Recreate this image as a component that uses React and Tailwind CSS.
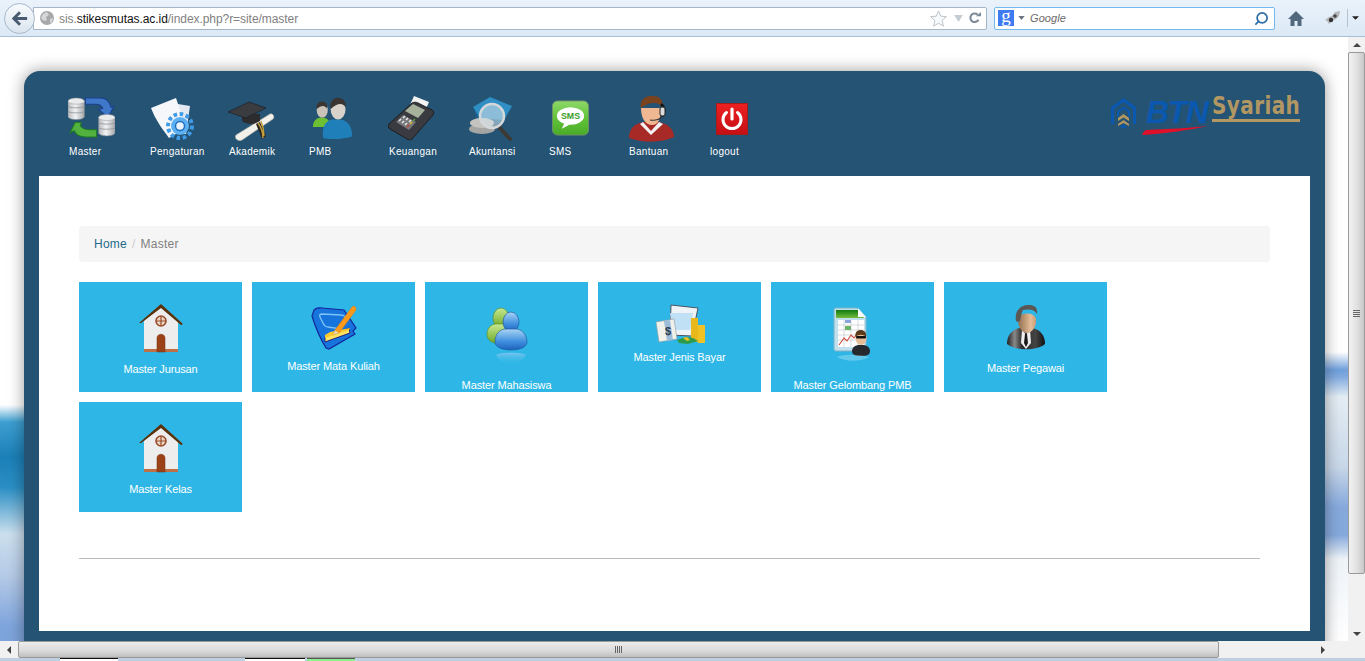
import React from 'react';
import { Search } from 'lucide-react';

// ---- nav icons ----
const DbStack = ({ x, y }) => (
  <g transform={`translate(${x} ${y})`}>
    <path d="M0 3v15c0 2 4 3 8 3s8-1 8-3V3z" fill="url(#silver)" stroke="#8a8f94" strokeWidth=".5" />
    <ellipse cx="8" cy="3" rx="8" ry="3" fill="#e8eaec" stroke="#9a9ea2" strokeWidth=".5" />
    <path d="M0 8c1 2 15 2 16 0M0 13c1 2 15 2 16 0" fill="none" stroke="#8f9499" strokeWidth=".8" />
  </g>
);

const IconMaster = () => (
  <svg viewBox="1 2 46 41" className="w-[47px] h-[44px]">
    <path d="M18 3h14c7 0 10 4 11 9l3-1-6 11-9-8 4-1c-1-3-4-4-7-4H18z" fill="#3f78c8" stroke="#1d3f8f" />
    <path d="M8 27h6l-1 3c2 3 6 4 10 4h6v7H18c-5 0-9-2-11-6l-4 2z" fill="#52b13f" stroke="#1f7a22" />
    <DbStack x={1} y={3} />
    <DbStack x={31} y={19} />
  </svg>
);

const IconPengaturan = () => (
  <svg viewBox="0 0 48 46" className="w-[48px] h-[46px]">
    <path d="M23 6l18 3-4 28-18-2z" fill="#e4e8f2" />
    <path d="M2 11L27 1l10 30-17 10C14 33 6 22 2 11z" fill="#f6f7fb" />
    <g transform="translate(31 29)">
      <circle r="12" fill="none" stroke="#3f9be8" strokeWidth="4" strokeDasharray="3.6 2.6" />
      <circle r="9" fill="#5db0f2" />
      <circle r="4.5" fill="#e8f2fb" stroke="#1f6fc0" strokeWidth="1.5" />
    </g>
  </svg>
);

const IconAkademik = () => (
  <svg viewBox="0 0 48 46" className="w-[48px] h-[46px]">
    <path d="M8 39L42 18c3-1 5 3 3 5L14 44c-4 2-8-2-6-5z" fill="#f1f0ea" stroke="#b9b7ac" strokeWidth=".6" />
    <path d="M28 28l4-2 6 14-4 3z" fill="#2a2520" />
    <path d="M30 27c3 4 5 9 5 15M33 25c2 5 3 9 3 15" stroke="#c6a03a" strokeWidth="1.4" fill="none" />
    <path d="M14 17v8c5 4 12 4 18 0v-7z" fill="#2c2c2e" />
    <path d="M0 16L21 6l17 6-20 10z" fill="#3b3c40" stroke="#1a1a1c" strokeWidth=".6" />
  </svg>
);

const IconPmb = () => (
  <svg viewBox="0 0 44 46" className="w-[41px] h-[43px]">
    <path d="M1 32c0-6 3-9 8-10h3c5 1 8 4 8 10z" fill="#6cc032" />
    <ellipse cx="11" cy="14" rx="6" ry="8" fill="#c9c2b8" />
    <path d="M5 13c-1-7 4-9 7-8 3 0 5 3 4 7-2-3-6-4-11 1z" fill="#3a3533" />
    <path d="M12 44c-2-11 2-18 9-20h9c9 1 13 8 13 18-7 3-23 4-31 2z" fill="#1f7fb8" />
    <ellipse cx="28" cy="13" rx="8" ry="11" fill="#d8d2ca" />
    <path d="M20 13c-2-9 5-13 9-12 5 0 8 5 7 10-2-4-8-6-16 2z" fill="#3a3533" />
  </svg>
);

const IconKeuangan = () => (
  <svg viewBox="0 0 48 46" className="w-[48px] h-[46px]">
    <path d="M26 0l15 6-4 9-15-6z" fill="#f2f2f2" />
    <path d="M1 28L24 7c2-1 4-1 6 0l14 7c2 1 2 3 1 5L24 43c-2 1-3 1-5 0L2 33c-2-1-2-3-1-5z" fill="#3a3b40" stroke="#1e1f22" />
    <path d="M17 15l8-7 12 6-7 8z" fill="#a7b29c" />
    <path d="M8 26l7-7 13 7-7 8z" fill="#75777c" />
    <path d="M11 25l2-2M14 27l2-2M17 29l2-2M15 22l2-2M18 24l2-2M21 26l2-2" stroke="#e8e8e8" strokeWidth="1.6" />
    <path d="M22 28l2-2" stroke="#e0c030" strokeWidth="1.6" />
    <path d="M19 31l2-2" stroke="#d04030" strokeWidth="1.6" />
    <path d="M25 25l2-2" stroke="#50a040" strokeWidth="1.6" />
  </svg>
);

const IconAkuntansi = () => (
  <svg viewBox="0 0 48 46" className="w-[48px] h-[46px]">
    <path d="M5 11L22 1l22 9-8 14-24-1z" fill="#2f8fc4" />
    <path d="M5 11l7 12 24 1v3H10z" fill="#1a5f8e" />
    <ellipse cx="14" cy="33" rx="13" ry="5" fill="#a5a5a3" />
    <ellipse cx="14" cy="27" rx="12" ry="5" fill="#c5c4c0" />
    <path d="M31 31l11 12" stroke="#3d3a36" strokeWidth="4" strokeLinecap="round" />
    <circle cx="24" cy="20" r="12" fill="#d9e4ea" fillOpacity=".55" stroke="#d5d8da" strokeWidth="2.5" />
  </svg>
);

const IconSms = () => (
  <svg viewBox="0 0 38 36" className="w-[37px] h-[36px]">
    <rect x=".5" y=".5" width="37" height="35" rx="5" fill="url(#smsGreen)" stroke="#6f8f6a" />
    <ellipse cx="19" cy="16" rx="14" ry="9" fill="#fff" />
    <path d="M13 23l-3 6 8-4z" fill="#fff" />
    <text x="19" y="19.5" textAnchor="middle" fontFamily="Liberation Sans, sans-serif" fontSize="9" fontWeight="700" fill="#3b9e1f">SMS</text>
  </svg>
);

const IconBantuan = () => (
  <svg viewBox="0 0 48 46" className="w-[48px] h-[46px]">
    <path d="M1 42c0-9 5-14 14-16h16c10 2 15 8 15 15-12 6-32 6-45 1z" fill="#a82a26" />
    <path d="M15 26l8 9 8-9 4 2-12 11-11-11z" fill="#f2f2f2" />
    <path d="M13 12c0 11 5 17 11 17s9-6 9-17z" fill="#f0b892" />
    <path d="M13 12C11 4 18-1 25 0c7 0 11 5 9 11-3-5-12-6-21 1z" fill="#7a4320" />
    <path d="M33 8c4 3 4 9 1 12" fill="none" stroke="#111" strokeWidth="2.5" />
    <rect x="32" y="11" width="5" height="9" rx="2" fill="#ddd" stroke="#222" />
    <path d="M34 20c-1 3-6 5-12 4" stroke="#333" strokeWidth="1.2" fill="none" />
  </svg>
);

const IconLogout = () => (
  <svg viewBox="0 0 32 32" className="w-[32px] h-[32px]">
    <rect x=".5" y=".5" width="31" height="31" fill="url(#powerRed)" stroke="#a51c1c" />
    <path d="M10.5 9.5a9 9 0 1 0 11 0" fill="none" stroke="#fff" strokeWidth="3" strokeLinecap="round" />
    <path d="M16 6v10" stroke="#fff" strokeWidth="3.2" strokeLinecap="round" />
  </svg>
);

// ---- tile icons ----
const IconHouse = () => (
  <svg viewBox="0 0 46 50" className="w-[46px] h-[50px]">
    <path d="M6 18L23 3l17 15v30H6z" fill="#ededed" />
    <path d="M1 20L23 1l22 20-2 1L23 5 3 20z" fill="#5a3208" />
    <rect x="6" y="46" width="34" height="3" fill="#bf6f45" />
    <circle cx="23" cy="18" r="5" fill="#e8d6c4" stroke="#9c4a2a" strokeWidth="1.6" />
    <path d="M23 13v10M18 18h10" stroke="#9c4a2a" strokeWidth="1.2" />
    <path d="M19 49V35c0-5 8-5 8 0v14z" fill="#9b4219" stroke="#74300f" strokeWidth=".5" />
  </svg>
);

const IconBook = () => (
  <svg viewBox="0 0 46 46" className="w-[46px] h-[46px]">
    <path d="M3 6c3-3 5-2 8-2l22 2 12 18-3 3 2 3-26 15-3-1C9 34 4 22 1 12z" fill="#1674dc" stroke="#14269c" strokeWidth="1.2" />
    <path d="M11 10l19 1c3 0 4 2 4 3l-4 11-13-2c-3 0-4-2-5-4l-3-6c-1-2 0-3 2-3z" fill="none" stroke="#7cc4f6" strokeWidth="1.4" />
    <path d="M14 33l24-9 1 5-25 9z" fill="#fde35f" stroke="#242080" />
    <path d="M14 31l5-3 20-4-1 2-24 8z" fill="#ffc92e" />
    <path d="M24 26L41 3c1-2 5 0 4 3L28 29l-6 2z" fill="#fb9a1a" stroke="#e47c08" strokeWidth=".5" />
    <path d="M22 31l2-5 4 3z" fill="#e9d4a5" />
  </svg>
);

const IconUsers = () => (
  <svg viewBox="0 0 42 60" className="w-[42px] h-[60px]">
    <ellipse cx="15" cy="11" rx="8" ry="10" fill="url(#msnGreen)" stroke="#5b8a1a" strokeWidth=".6" />
    <path d="M1 28c0-7 4-11 9-11h10c5 0 8 5 8 11 0 5-5 9-13 9S1 33 1 28z" fill="url(#msnGreen)" stroke="#5b8a1a" strokeWidth=".6" />
    <ellipse cx="25" cy="15" rx="8" ry="10" fill="url(#msnBlue)" stroke="#1d4f9c" strokeWidth=".6" />
    <path d="M9 35c0-8 5-13 11-13h10c6 0 11 6 11 13 0 5-7 8-16 8S9 40 9 35z" fill="url(#msnBlue)" stroke="#1d4f9c" strokeWidth=".6" />
    <path d="M10 48c3-3 27-3 30 0-3 5-8 10-15 10s-12-5-15-10z" fill="url(#msnFade)" />
  </svg>
);

const IconMoney = () => (
  <svg viewBox="0 0 50 42" className="w-[50px] h-[42px]">
    <path d="M16 1l27 3-6 28-22-1z" fill="#eef3f8" stroke="#4a5460" />
    <path d="M15 9h23l-3 17H17z" fill="#bfe0f5" />
    <rect x="36" y="14" width="7" height="24" fill="#e8b81c" />
    <rect x="43" y="21" width="7" height="18" fill="#f0c224" />
    <path d="M1 18l18-3 3 20-18 3z" fill="#f1f1ec" stroke="#8e98a0" strokeWidth=".6" />
    <path d="M9 17l6-1 3 20-6 1z" fill="#9dbcd8" />
    <text x="13" y="31" textAnchor="middle" fontFamily="Liberation Sans, sans-serif" fontSize="11" fontWeight="700" fill="#30404f">$</text>
    <path d="M22 36l9-3 7 1 5 3-10 3-9-1z" fill="#2f9a4a" />
    <path d="M28 34l4-1 3 3-3 1z" fill="#f0c224" />
  </svg>
);

const IconSheet = () => (
  <svg viewBox="0 0 40 58" className="w-[40px] h-[58px]">
    <path d="M1 3c0-1 1-2 2-2h21l9 9v34H3c-1 0-2-1-2-2z" fill="#bfe0ec" stroke="#7eb0c8" />
    <path d="M3 3h22l6 8H3z" fill="url(#sheetGreen)" />
    <path d="M25 1l8 9h-8z" fill="#fff" />
    <rect x="5" y="13" width="26" height="27" fill="#fff" />
    <path d="M5 18h26M5 23h26M5 28h26M5 33h26M11 13v27M18 13v27M25 13v27" stroke="#bcc4c8" strokeWidth=".6" />
    <rect x="12" y="19" width="6" height="4" fill="#6db36a" />
    <rect x="12" y="13" width="6" height="3" fill="#8aa4dc" />
    <path d="M6 38l5-7 3 3 4-6 3 3 4-5" fill="none" stroke="#d04a3a" strokeWidth="1.1" />
    <path d="M19 44c0-4 4-6 7-6h4c3 0 7 2 7 6 0 4-3 5-9 5s-9-1-9-5z" fill="#262a2e" />
    <ellipse cx="28" cy="31" rx="5.5" ry="7" fill="#e6bf98" />
    <path d="M22.5 30c-1-6 3-7 5.5-7s6 2 5 7c-2-3-8-3-10.500 0z" fill="#5c3a1c" />
    <rect x="23" y="29" width="10" height="2.4" rx="1" fill="#111" />
    <path d="M4 50c6-3 25-3 32 0-8 5-24 5-32 0z" fill="#fff" fillOpacity=".25" />
  </svg>
);

const IconBoss = () => (
  <svg viewBox="0 0 38 46" className="w-[38px] h-[46px]">
    <path d="M0 40c0-9 5-14 12-16h14c7 2 12 7 12 16-8 7-30 7-38 0z" fill="url(#suit)" />
    <path d="M15 25l4 6 4-6 1 14-5 6-5-6z" fill="#efefef" />
    <path d="M18 30h2l1 9-2 4-2-4z" fill="#1a1a1a" />
    <path d="M11 16c0 7 4 13 9 13s10-7 9-14c-1-7-17-8-18 1z" fill="url(#skin)" />
    <path d="M9 17C7 6 15 0 22 1c6 0 9 3 8 9-3-5-8-5-14-4-2 3-2 7-3 11-2 1-3 1-4 0z" fill="#5a5754" />
  </svg>
);

const Defs = () => (
  <svg className="w-0 h-0 block" aria-hidden="true">
    <defs>
      <linearGradient id="silver" x1="0" x2="1" y1="0" y2="0">
        <stop offset="0" stopColor="#b5b8bb" /><stop offset=".45" stopColor="#f2f3f4" /><stop offset="1" stopColor="#a4a7aa" />
      </linearGradient>
      <linearGradient id="smsGreen" x1="0" x2="0" y1="0" y2="1">
        <stop offset="0" stopColor="#8ed86a" /><stop offset=".5" stopColor="#62c33a" /><stop offset="1" stopColor="#4aab27" />
      </linearGradient>
      <linearGradient id="powerRed" x1="0" x2="0" y1="0" y2="1">
        <stop offset="0" stopColor="#ee2020" /><stop offset="1" stopColor="#c40f14" />
      </linearGradient>
      <linearGradient id="msnGreen" x1="0" x2="0" y1="0" y2="1">
        <stop offset="0" stopColor="#c8e890" /><stop offset="1" stopColor="#69a722" />
      </linearGradient>
      <linearGradient id="msnBlue" x1="0" x2="0" y1="0" y2="1">
        <stop offset="0" stopColor="#a8d4f4" /><stop offset=".6" stopColor="#3f8ede" /><stop offset="1" stopColor="#1e63bd" />
      </linearGradient>
      <linearGradient id="msnFade" x1="0" x2="0" y1="0" y2="1">
        <stop offset="0" stopColor="#7fc4ef" stopOpacity=".9" /><stop offset="1" stopColor="#2fb8e6" stopOpacity="0" />
      </linearGradient>
      <linearGradient id="sheetGreen" x1="0" x2="0" y1="0" y2="1">
        <stop offset="0" stopColor="#0f7a10" /><stop offset="1" stopColor="#74bb3d" />
      </linearGradient>
      <linearGradient id="suit" x1="0" x2="1" y1="0" y2="0">
        <stop offset="0" stopColor="#1f1f1f" /><stop offset=".2" stopColor="#888" /><stop offset=".4" stopColor="#2a2a2a" /><stop offset=".75" stopColor="#444" /><stop offset="1" stopColor="#111" />
      </linearGradient>
      <linearGradient id="skin" x1="0" x2="1" y1="0" y2="0">
        <stop offset="0" stopColor="#8f6d4d" /><stop offset=".7" stopColor="#e4bd98" /><stop offset="1" stopColor="#c89b76" />
      </linearGradient>
    </defs>
  </svg>
);

const navItems = [
  { label: 'Master', icon: IconMaster, box: 'pl-0 pt-[25px]', w: 'w-[81px]' },
  { label: 'Pengaturan', icon: IconPengaturan, box: 'pl-0 pt-[26px]', w: 'w-[79px]' },
  { label: 'Akademik', icon: IconAkademik, box: 'pl-0 pt-[25px]', w: 'w-[80px]' },
  { label: 'PMB', icon: IconPmb, box: 'pl-[4px] pt-[26px]', w: 'w-[80px]' },
  { label: 'Keuangan', icon: IconKeuangan, box: 'pl-0 pt-[25px]', w: 'w-[80px]' },
  { label: 'Akuntansi', icon: IconAkuntansi, box: 'pl-0 pt-[25px]', w: 'w-[80px]' },
  { label: 'SMS', icon: IconSms, box: 'pl-[4px] pt-[29px]', w: 'w-[80px]' },
  { label: 'Bantuan', icon: IconBantuan, box: 'pl-0 pt-[25px]', w: 'w-[81px]' },
  { label: 'logout', icon: IconLogout, box: 'pl-[7px] pt-[32px]', w: 'w-[60px]' },
];

// pt = top of icon inside tile, h = icon box, text follows in flow
const tiles = [
  { label: 'Master Jurusan', icon: IconHouse, pt: 'pt-[21px]', h: 'h-[60px]' },
  { label: 'Master Mata Kuliah', icon: IconBook, pt: 'pt-[22px]', h: 'h-[56px]' },
  { label: 'Master Mahasiswa', icon: IconUsers, pt: 'pt-[25px]', h: 'h-[72px]' },
  { label: 'Master Jenis Bayar', icon: IconMoney, pt: 'pt-[22px]', h: 'h-[47px]' },
  { label: 'Master Gelombang PMB', icon: IconSheet, pt: 'pt-[25px]', h: 'h-[72px]' },
  { label: 'Master Pegawai', icon: IconBoss, pt: 'pt-[22px]', h: 'h-[58px]' },
  { label: 'Master Kelas', icon: IconHouse, pt: 'pt-[21px]', h: 'h-[60px]' },
];

const Logo = () => (
  <div className="flex items-start mt-[26px] w-[191px] shrink-0">
    <svg viewBox="0 0 27 31" className="w-[27px] h-[31px] shrink-0">
      <path d="M1 27V10L13.500 1 26 10v17h-3V12L13.500 5 4 12v15z" fill="#0a58b0" />
      <path d="M7 20v-6l6.500-4.500L20 14v6h-2v-5l-4.500-3L9 15v5z" fill="#0a58b0" />
      <path d="M8 21l5.500-4 5.500 4v3l-5.500-3.500L8 24z" fill="#b39762" />
      <path d="M8 27l5.500-4 5.500 4v2l-5.500-3L8 29z" fill="#b39762" />
      <path d="M11 29l2.500-1.500L16 29v2h-5z" fill="#0a58b0" />
    </svg>
    <div className="relative ml-[9px] w-[62px] h-[38px] shrink-0">
      <span className="block italic font-bold text-[32px] leading-[30px] tracking-[-1.5px] text-[#0a58b0]">BTN</span>
      <svg viewBox="0 0 66 9" className="absolute -left-[4px] top-[29px] w-[66px] h-[9px]">
        <path d="M0 9C1 6 3 4 5 4 25 3 48 2 66 0 48 4 20 8 0 9z" fill="#e0102a" />
      </svg>
    </div>
    <div className="ml-[4px] mt-[1px] h-[24px] border-b-[3px] border-[#b39762]">
      <span className="block origin-bottom scale-y-[1.2] font-['DejaVu_Sans',sans-serif] font-bold text-[20px] leading-[21px] tracking-[0.4px] text-[#b39762]">Syariah</span>
    </div>
  </div>
);

const BrowserBar = () => (
  <div className="h-[37px] shrink-0 flex items-center border-b border-[#a9bfd4] bg-[linear-gradient(#eaf2fb,#dbe9f6)] pl-[4px]">
    <div className="relative z-10 w-[31px] h-[31px] rounded-full border border-[#a8b8c8] bg-[linear-gradient(#f7fafd,#dbe5ef)] flex items-center justify-center shrink-0">
      <svg viewBox="0 0 18 16" className="w-[16px] h-[15px]">
        <path d="M9 1L2 8l7 7M3 8h14" fill="none" stroke="#475a70" strokeWidth="3.2" />
      </svg>
    </div>
    <div className="-ml-[2px] w-[954px] h-[23px] shrink-0 flex items-center bg-white border border-[#a5b6c6] rounded-r-[2px] pl-[6px] pr-[5px]">
      <svg viewBox="0 0 14 14" className="w-[14px] h-[14px] shrink-0">
        <circle cx="7" cy="7" r="7" fill="#a6a8aa" />
        <path d="M3 3l4-2 2 3-3 2 1 3-3 1-3-3zM10 8l3-1-1 4-2 1z" fill="#d6d7d8" />
      </svg>
      <div className="ml-[5px] pt-[1px] flex-1 text-[12px] leading-none tracking-[-0.06px] text-[#7f7f7f]">
        sis.<span className="text-[#111]">stikesmutas.ac.id</span>/index.php?r=site/master
      </div>
      <svg viewBox="0 0 18 18" className="w-[17px] h-[17px] shrink-0">
        <path d="M9 1l2.400 5.500 6 .6-4.500 4 1.300 6L9 14l-5.200 3.100 1.300-6-4.500-4 6-.6z" fill="#f6f8fa" stroke="#b9c0c6" />
      </svg>
      <svg viewBox="0 0 10 8" className="ml-[7px] w-[9px] h-[7px] shrink-0"><path d="M0 0h10L5 8z" fill="#c4ccd4" /></svg>
      <svg viewBox="0 0 14 14" className="ml-[6px] w-[12px] h-[12px] shrink-0">
        <path d="M11 9a5 5 0 1 1-1-6" fill="none" stroke="#7a8a98" strokeWidth="2.400" />
        <path d="M8 5h6V0z" fill="#7a8a98" />
      </svg>
    </div>
    <div className="ml-[7px] w-[281px] h-[23px] shrink-0 flex items-center bg-white border border-[#74b9ee] rounded-[2px] pl-[3px] pr-[5px]">
      <span className="w-[16px] h-[16px] bg-[#3f7bf0] flex items-center justify-center font-['Liberation_Serif',serif] text-[19px] leading-none pb-[5px] text-white">g</span>
      <svg viewBox="0 0 8 5" className="ml-[4px] w-[7px] h-[4px]"><path d="M0 0h8L4 5z" fill="#6b7680" /></svg>
      <span className="ml-[5px] pt-[1px] flex-1 italic text-[11px] leading-none tracking-[0.1px] text-[#6a6a6a]">Google</span>
      <Search className="w-[15px] h-[15px] -scale-x-100 text-[#2f6ea8]" strokeWidth={2.8} />
    </div>
    <svg viewBox="0 0 16 15" className="ml-[13px] w-[16px] h-[15px] shrink-0">
      <path d="M8 0L0 8h2.500v7h4v-5h3v5h4V8H16z" fill="#52687c" />
    </svg>
    <svg viewBox="0 0 16 14" className="ml-[21px] w-[16px] h-[14px] shrink-0">
      <path d="M0 9l4-3 3-1 3-4 5-1-1 5-3 3-4 2-3 3-2-3z" fill="#b4b6b8" />
      <circle cx="6" cy="9" r="2.200" fill="#333" /><circle cx="10" cy="5" r="1.800" fill="#444" />
    </svg>
    <div className="ml-[6px] w-px h-[18px] bg-[#b5c3d0]" />
    <svg viewBox="0 0 8 4" className="ml-[4px] w-[7px] h-[4px]"><path d="M0 0h8L4 4z" fill="#222" /></svg>
  </div>
);

const Arrow = ({ points }) => (
  <svg viewBox="0 0 8 8" className="w-[8px] h-[8px]"><polygon points={points} fill="#444" /></svg>
);

const App = () => {
  return (
    <div className="w-[1365px] h-[661px] overflow-hidden flex flex-col bg-white font-['Liberation_Sans',sans-serif]">
      <Defs />
      <BrowserBar />

      <div className="flex-1 min-h-0 flex">
        <div className="flex-1 min-w-0 flex overflow-hidden">
          {/* backdrop strips either side of the panel */}
          <div className="w-[24px] shrink-0 bg-[linear-gradient(#fff_0,#fff_368px,#3d9fd0_385px,#1c80b8_420px,#2a8ec4_450px,#cbdfee_497px,#b4c9e6_540px,#7ea4dc_590px)]" />

          <div className="flex-1 min-w-0 pt-[34px]">
            <div className="relative h-[600px] rounded-t-[16px] bg-[#245373] px-[15px] shadow-[0_0_16px_rgba(0,0,0,0.4)]">
              {/* header nav */}
              <div className="h-[105px] flex">
                <div className="flex pl-[30px]">
                  {navItems.map((item) => {
                    const NavIcon = item.icon;
                    return (
                      <div key={item.label} className={`${item.w} h-[105px] flex flex-col`}>
                        <div className={`h-[75px] -ml-[1px] ${item.box}`}>
                          <NavIcon />
                        </div>
                        <span className="text-[10px] leading-[12px] tracking-[0.3px] text-white">{item.label}</span>
                      </div>
                    );
                  })}
                </div>
                <div className="ml-auto pr-[9px]"><Logo /></div>
              </div>

              {/* content */}
              <div className="h-[455px] bg-white px-[40px] pt-[50px]">
                <div className="w-[1191px] h-[36px] rounded-[4px] bg-[#f5f5f5] px-[15px] flex items-center text-[12px] tracking-[0.25px]">
                  <span className="text-[#1f6a8a]">Home</span>
                  <span className="mx-[5px] text-[#cccccc]">/</span>
                  <span className="text-[#808080]">Master</span>
                </div>

                <div className="mt-[20px] flex flex-wrap gap-[10px] w-[1100px]">
                  {tiles.map((tile) => {
                    const TileIcon = tile.icon;
                    return (
                      <div key={tile.label} className={`w-[163px] h-[110px] overflow-hidden bg-[#2eb7e6] flex flex-col items-center ${tile.pt}`}>
                        <div className={`${tile.h} shrink-0`}><TileIcon /></div>
                        <span className="text-[11px] leading-[13px] tracking-[-0.12px] text-white whitespace-nowrap">{tile.label}</span>
                      </div>
                    );
                  })}
                </div>

                <div className="mt-[46px] w-[1181px] h-px bg-[#bbbbbb]" />
              </div>
            </div>
          </div>

          <div className="w-[23px] shrink-0 bg-[linear-gradient(#fff_0,#fff_315px,#6f9fdb_333px,#82abe0_340px,#e4edf4_360px,#c8d7e8_430px,#86a9dc_470px,#86a9dc_498px,#eef3f8_522px,#fff_604px)]" />
        </div>

        {/* vertical scrollbar */}
        <div className="w-[17px] shrink-0 bg-[#f1f1f1] flex flex-col">
          <div className="h-[15px] flex items-center justify-center"><Arrow points="4,2 8,6 0,6" /></div>
          <div className="h-[522px] border border-[#9a9a9a] rounded-[2px] bg-[linear-gradient(90deg,#f2f2f2,#e2e2e2_50%,#c9c9c9)] flex flex-col items-center justify-center gap-px">
            <div className="w-[7px] h-px bg-[#666]" />
            <div className="w-[7px] h-px bg-[#666]" />
            <div className="w-[7px] h-px bg-[#666]" />
            <div className="w-[7px] h-px bg-[#666]" />
          </div>
          <div className="flex-1" />
          <div className="h-[15px] flex items-center justify-center"><Arrow points="0,2 8,2 4,6" /></div>
        </div>
      </div>

      {/* horizontal scrollbar */}
      <div className="h-[17px] shrink-0 bg-[#f1f1f1] flex items-center">
        <div className="w-[18px] flex justify-center"><Arrow points="2,4 6,0 6,8" /></div>
        <div className="w-[1201px] h-[17px] border border-[#9a9a9a] rounded-[2px] bg-[linear-gradient(#ececec,#dcdcdc_55%,#bfbfbf)] flex items-center justify-center gap-px">
          <div className="w-px h-[7px] bg-[#666]" />
          <div className="w-px h-[7px] bg-[#666]" />
          <div className="w-px h-[7px] bg-[#666]" />
          <div className="w-px h-[7px] bg-[#666]" />
        </div>
        <div className="flex-1" />
        <div className="w-[8px] mr-[21px] flex justify-center"><Arrow points="2,0 6,4 2,8" /></div>
        <div className="w-[17px]" />
      </div>

      {/* sliver of the desktop taskbar */}
      <div className="h-[3px] shrink-0 bg-[#bcd0e2] flex">
        <div className="ml-[60px] w-[58px] border-t border-[#111] bg-white" />
        <div className="ml-[127px] w-[60px] border-t border-[#111] bg-white" />
        <div className="ml-[2px] w-[48px] border-t border-[#555] bg-[#8ef08e]" />
      </div>
    </div>
  );
};

export default App;
